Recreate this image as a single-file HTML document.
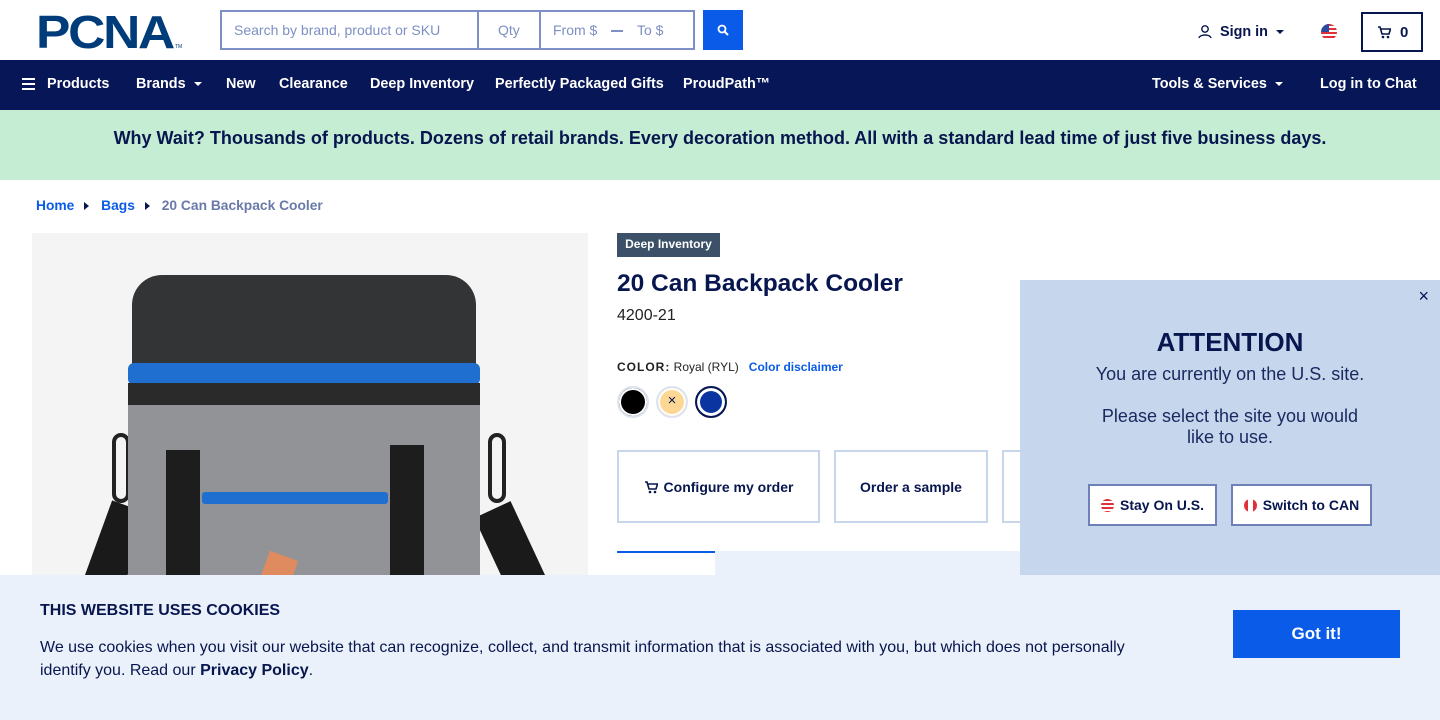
<!DOCTYPE html>
<html style="overflow:hidden;height:720px"><head><meta charset="utf-8"><style>
*{box-sizing:border-box;margin:0;padding:0}
body{width:1440px;height:720px;overflow:hidden;font-family:"Liberation Sans",sans-serif;background:#fff;color:#07164f;position:relative}
.abs{position:absolute}
.nav a{position:absolute;top:76px;color:#fff;font-weight:bold;font-size:14.4px}
.caret{display:inline-block;width:0;height:0;border-left:4px solid transparent;border-right:4px solid transparent;border-top:4px solid currentColor;vertical-align:middle;margin-left:8px}
.btn{position:absolute;top:450px;height:73px;border:2px solid #c8d6ec;display:flex;align-items:center;justify-content:center;font-weight:bold;font-size:14px;color:#07164f}
.sw{position:absolute;top:386px;width:32px;height:32px;border-radius:50%;border:2px solid #dde3ee}
</style></head><body>
<!-- header -->
<div class="abs" style="left:36px;top:11px;font-size:46px;font-weight:900;color:#003b7a;letter-spacing:-2px;transform:scaleX(1.12);transform-origin:left;line-height:42px">PCNA</div>
<div class="abs" style="left:175px;top:44px;font-size:5px;color:#003b7a">TM</div>
<div class="abs" style="left:220px;top:10px;width:475px;height:40px;border:2px solid #7d8fc4"></div>
<div class="abs" style="left:477px;top:10px;width:2px;height:40px;background:#7d8fc4"></div>
<div class="abs" style="left:539px;top:10px;width:2px;height:40px;background:#7d8fc4"></div>
<div class="abs" style="left:234px;top:22px;font-size:14px;color:#7d8fc4">Search by brand, product or SKU</div>
<div class="abs" style="left:498px;top:22px;font-size:14px;color:#7d8fc4">Qty</div>
<div class="abs" style="left:553px;top:22px;font-size:14px;color:#7d8fc4">From $</div>
<div class="abs" style="left:611px;top:30px;width:12px;height:2px;background:#7d8fc4"></div>
<div class="abs" style="left:637px;top:22px;font-size:14px;color:#7d8fc4">To $</div>
<div class="abs" style="left:703px;top:10px;width:40px;height:40px;background:#0a5ce8"><svg width="40" height="40"><circle cx="19" cy="19" r="3.5" stroke="#fff" stroke-width="1.8" fill="none"/><path d="M21.5 21.5 25 25" stroke="#fff" stroke-width="2"/></svg></div>
<svg class="abs" style="left:1197px;top:24px" width="16" height="16"><circle cx="8" cy="5" r="3.2" stroke="#07164f" stroke-width="1.4" fill="none"/><path d="M2 14c1-4 11-4 12 0" stroke="#07164f" stroke-width="1.4" fill="none"/></svg>
<div class="abs" style="left:1220px;top:24px;font-size:14.4px;font-weight:bold">Sign in<span class="caret"></span></div>
<div class="abs" style="left:1321px;top:24px;width:16px;height:16px;border-radius:50%;background:repeating-linear-gradient(#e0303a 0 2px,#fff 2px 4px);overflow:hidden"><div style="width:8px;height:8px;background:#2b4aa0"></div></div>
<div class="abs" style="left:1361px;top:12px;width:62px;height:40px;border:2px solid #07164f"></div>
<svg class="abs" style="left:1377px;top:25px" width="14" height="14"><path d="M1 2h2l2 7h7l1.5-5H4" stroke="#07164f" stroke-width="1.6" fill="none"/><circle cx="6" cy="12" r="1.3" fill="#07164f"/><circle cx="11" cy="12" r="1.3" fill="#07164f"/></svg>
<div class="abs" style="left:1400px;top:24px;font-size:15px;font-weight:bold">0</div>
<!-- nav -->
<div class="abs" style="left:0;top:60px;width:1440px;height:50px;background:#071656"></div>
<div class="nav">
<div class="abs" style="left:22px;top:78px;width:13px;height:12px;border-top:2px solid #fff;border-bottom:2px solid #fff"><div style="margin-top:3px;height:2px;background:#fff"></div></div>
<a style="left:47px">Products</a><a style="left:136px">Brands<span class="caret"></span></a><a style="left:226px">New</a><a style="left:279px">Clearance</a><a style="left:370px">Deep Inventory</a><a style="left:495px">Perfectly Packaged Gifts</a><a style="left:683px">ProudPath™</a><a style="left:1152px">Tools &amp; Services<span class="caret"></span></a><a style="left:1320px">Log in to Chat</a>
</div>
<div class="abs" style="left:0;top:110px;width:1440px;height:70px;background:#c5edd3;text-align:center;font-weight:bold;font-size:18px;line-height:56px">Why Wait? Thousands of products. Dozens of retail brands. Every decoration method. All with a standard lead time of just five business days.</div>
<!-- breadcrumb -->
<div class="abs" style="left:36px;top:198px;font-size:13.8px;font-weight:bold;color:#0a5ce8">Home <span style="display:inline-block;border-left:5px solid #07164f;border-top:4px solid transparent;border-bottom:4px solid transparent;margin:0 12px 0 6px"></span>Bags <span style="display:inline-block;border-left:5px solid #07164f;border-top:4px solid transparent;border-bottom:4px solid transparent;margin:0 12px 0 6px"></span><span style="color:#6a7aa8">20 Can Backpack Cooler</span></div>
<!-- image -->
<div class="abs" style="left:32px;top:233px;width:556px;height:342px;background:#f4f4f4;overflow:hidden">
 <div class="abs" style="left:55px;top:270px;width:40px;height:140px;background:#1a1a1a;transform:rotate(20deg)"></div>
 <div class="abs" style="left:470px;top:270px;width:40px;height:140px;background:#1a1a1a;transform:rotate(-25deg)"></div>
 <div class="abs" style="left:80px;top:200px;width:18px;height:70px;border:4px solid #222;border-radius:10px"></div>
 <div class="abs" style="left:456px;top:200px;width:18px;height:70px;border:4px solid #222;border-radius:10px"></div>
 <div class="abs" style="left:96px;top:150px;width:352px;height:200px;background:#929396"></div>
 <div class="abs" style="left:100px;top:42px;width:344px;height:105px;background:#333436;border-radius:30px 30px 4px 4px"></div>
 <div class="abs" style="left:96px;top:130px;width:352px;height:22px;background:#1e6fd0;border-radius:6px"></div>
 <div class="abs" style="left:96px;top:150px;width:352px;height:22px;background:#2a2a2a"></div>
 <div class="abs" style="left:134px;top:217px;width:34px;height:140px;background:#1d1d1d"></div>
 <div class="abs" style="left:358px;top:212px;width:34px;height:140px;background:#1d1d1d"></div>
 <div class="abs" style="left:170px;top:259px;width:186px;height:12px;background:#1e6fd0;border-radius:3px"></div>
 <div class="abs" style="left:232px;top:322px;width:30px;height:30px;background:#e08a60;transform:rotate(20deg)"></div>
</div>
<!-- product info -->
<div class="abs" style="left:617px;top:233px;width:103px;height:24px;background:#3c5168;color:#fff;font-size:12px;font-weight:bold;line-height:22px;text-align:center">Deep Inventory</div>
<div class="abs" style="left:617px;top:270px;font-size:24.5px;font-weight:bold">20 Can Backpack Cooler</div>
<div class="abs" style="left:617px;top:307px;font-size:16px;color:#222">4200-21</div>
<div class="abs" style="left:617px;top:360px;font-size:12px;color:#222"><b style="letter-spacing:1px">COLOR:</b> Royal (RYL) &nbsp; <b style="color:#0a5ce8">Color disclaimer</b></div>
<div class="sw" style="left:617px;background:#000;box-shadow:inset 0 0 0 2px #fff"></div>
<div class="sw" style="left:656px;background:#fcd894;box-shadow:inset 0 0 0 2px #fff;text-align:center;line-height:26px;font-size:15px">×</div>
<div class="sw" style="left:695px;background:#0a35a0;border-color:#07164f;box-shadow:inset 0 0 0 3px #fff"></div>
<div class="btn" style="left:617px;width:203px"><svg width="14" height="14" style="margin-right:6px"><path d="M1 2h2l2 7h7l1.5-5H4" stroke="#07164f" stroke-width="1.6" fill="none"/><circle cx="6" cy="12" r="1.3" fill="#07164f"/><circle cx="11" cy="12" r="1.3" fill="#07164f"/></svg>Configure my order</div>
<div class="btn" style="left:834px;width:154px">Order a sample</div>
<div class="btn" style="left:1002px;width:40px"></div>
<div class="abs" style="left:617px;top:551px;width:500px;height:24px;background:#ebf1fa"></div>
<div class="abs" style="left:617px;top:551px;width:98px;height:24px;background:#fff;border-top:2px solid #0a5ce8"></div>
<!-- modal -->
<div class="abs" style="left:1020px;top:280px;width:420px;height:295px;background:#c6d6ec;text-align:center">
 <div class="abs" style="right:11px;top:6px;font-size:18px">×</div>
 <div style="margin-top:47px;font-size:26px;font-weight:bold">ATTENTION</div>
 <div style="margin-top:6px;font-size:18px;line-height:21px;color:#1a2a60">You are currently on the U.S. site.<br><br>Please select the site you would<br>like to use.</div>
 <div class="abs" style="left:68px;top:204px;width:129px;height:42px;border:2px solid #6f80b8;background:#fff;font-weight:bold;font-size:14px;line-height:38px"><span style="display:inline-block;width:13px;height:13px;border-radius:50%;vertical-align:-2px;margin-right:6px;background:repeating-linear-gradient(#e0303a 0 2px,#fff 2px 4px)"></span>Stay On U.S.</div>
 <div class="abs" style="left:211px;top:204px;width:141px;height:42px;border:2px solid #6f80b8;background:#fff;font-weight:bold;font-size:14px;line-height:38px"><span style="display:inline-block;width:13px;height:13px;border-radius:50%;vertical-align:-2px;margin-right:6px;background:linear-gradient(90deg,#e0303a 0 30%,#fff 30% 70%,#e0303a 70%)"></span>Switch to CAN</div>
</div>
<!-- cookies -->
<div class="abs" style="left:0;top:575px;width:1440px;height:145px;background:#ebf1fa">
 <div class="abs" style="left:40px;top:27px;font-size:16px;font-weight:bold">THIS WEBSITE USES COOKIES</div>
 <div class="abs" style="left:40px;top:61px;width:1110px;font-size:16px;line-height:23px">We use cookies when you visit our website that can recognize, collect, and transmit information that is associated with you, but which does not personally identify you. Read our <b>Privacy Policy</b>.</div>
 <div class="abs" style="left:1233px;top:35px;width:167px;height:48px;background:#0a5ce8;color:#fff;font-weight:bold;font-size:17px;text-align:center;line-height:48px">Got it!</div>
</div>
</body></html>
